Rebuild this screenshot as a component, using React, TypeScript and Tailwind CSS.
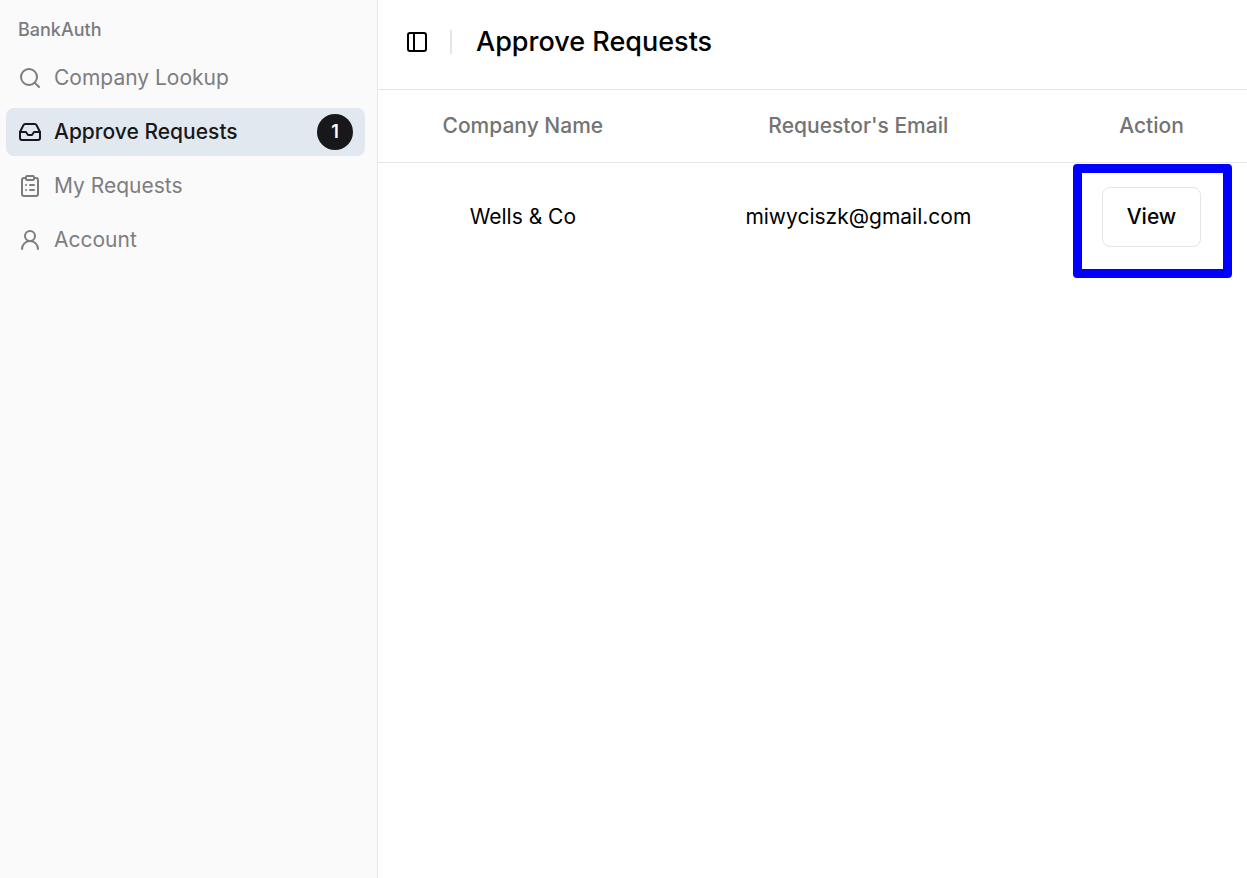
import React, { useState } from "react";
import { ClipboardList, Inbox, PanelLeft, Search, UserRound } from "lucide-react";
import clsx from "clsx";

const menuItems = [
  { title: "Company Lookup", href: "#company-lookup", icon: Search },
  { title: "Approve Requests", href: "#approve-requests", icon: Inbox, badge: 1 },
  { title: "My Requests", href: "#my-requests", icon: ClipboardList },
  { title: "Account", href: "#account", icon: UserRound },
];

const requests = [{ company: "Wells & Co", email: "miwyciszk@gmail.com" }];

function Sidebar() {
  return (
    <aside className="w-[378px] shrink-0 border-r border-[#e5e7eb] bg-[#fafafa] pt-1.5 pr-3 pl-1.5">
      <div className="flex h-12 items-center px-3 text-[18px] leading-6 font-medium text-[#7a7a7f]">
        BankAuth
      </div>
      <nav className="flex flex-col gap-1.5">
        {menuItems.map((item) => (
          <a
            key={item.title}
            href={item.href}
            className={clsx(
              "flex h-12 items-center gap-3 rounded-lg px-3 text-[21px] leading-[30px]",
              item.badge
                ? "bg-[#e2e8f0] font-medium text-[#18181b]"
                : "text-[#7d7d81]"
            )}
          >
            <item.icon size={24} strokeWidth={2} />
            <span className="flex-1">{item.title}</span>
            {item.badge && (
              <span className="flex size-9 items-center justify-center rounded-full bg-[#18181b] text-[18px] leading-6 font-semibold text-white">
                {item.badge}
              </span>
            )}
          </a>
        ))}
      </nav>
    </aside>
  );
}

export default function App() {
  const [open, setOpen] = useState(true);

  return (
    <div className="flex min-h-screen bg-white font-['Inter',sans-serif] text-black">
      {open && <Sidebar />}
      <main className="min-w-0 flex-1">
        <header className="flex h-[90px] items-center border-b border-[#e5e5e5] pr-6 pb-1.5 pl-[27px]">
          <button
            type="button"
            aria-label="Toggle Sidebar"
            onClick={() => setOpen(!open)}
            className="mr-[21px]"
          >
            <PanelLeft size={24} />
          </button>
          <div className="mr-6 h-6 w-0.5 bg-[#e5e5e5]" />
          <h1 className="text-[27px] leading-[42px] font-medium">
            Approve Requests
          </h1>
        </header>
        <table className="w-full text-center text-[21px] leading-[30px]">
          <thead>
            <tr className="h-[72px] border-b border-[#e5e5e5] text-[#737373]">
              <th className="w-1/3 font-medium">Company Name</th>
              <th className="font-medium">Requestor's Email</th>
              <th className="w-[198px] pl-[7px] font-medium">Action</th>
            </tr>
          </thead>
          <tbody>
            {requests.map((request) => (
              <tr key={request.email} className="h-[110px]">
                <td>{request.company}</td>
                <td>{request.email}</td>
                <td className="relative pl-[7px]">
                  <button
                    type="button"
                    className="h-15 rounded-lg border border-[#e5e5e5] px-6 font-medium"
                  >
                    View
                  </button>
                  <div className="pointer-events-none absolute top-px right-[15px] h-[114px] w-[159px] rounded-sm border-[9px] border-[#0000ff]" />
                </td>
              </tr>
            ))}
          </tbody>
        </table>
      </main>
    </div>
  );
}
